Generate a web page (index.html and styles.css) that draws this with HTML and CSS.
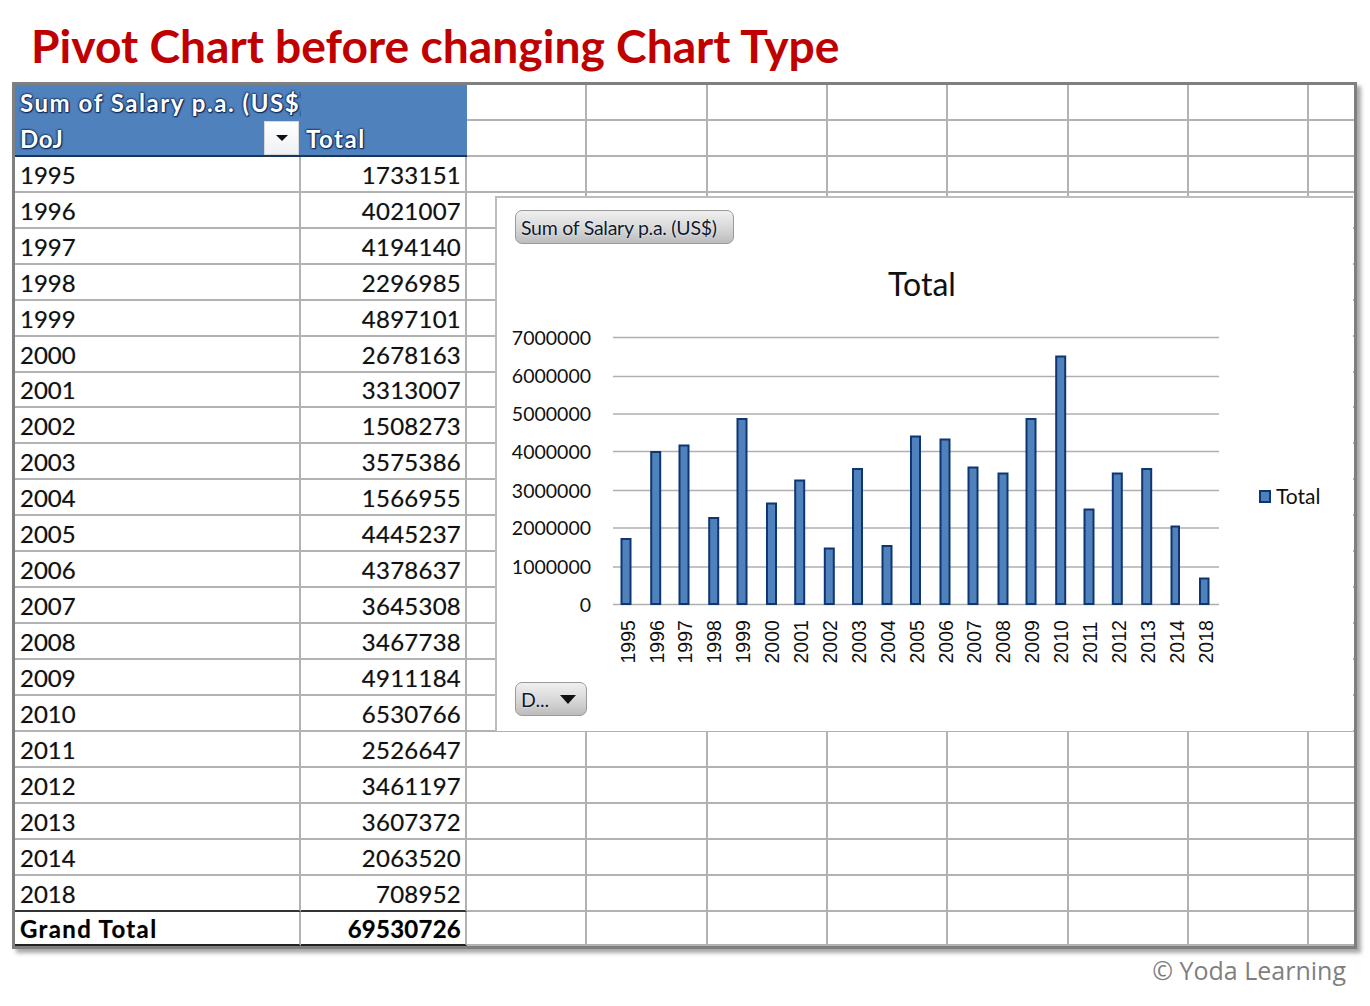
FILE: index.html
```html
<!DOCTYPE html>
<html lang="en">
<head>
<meta charset="utf-8">
<title>Pivot Chart before changing Chart Type</title>
<link rel="stylesheet" href="styles.css">
</head>
<body>
<h1 class="title">Pivot Chart before changing Chart Type</h1>
<main class="frame">
  <section class="pivot">
    <div class="head head-span">Sum of Salary p.a. (US$)</div>
    <div class="head"></div>
    <div class="head head-field"><span>DoJ</span><span class="filter"><svg width="14" height="8" viewBox="0 0 14 8"><path d="M1 1h12L7 7z"/></svg></span></div>
    <div class="head head-total">Total</div>
    <div class="year">1995</div><div class="num">1733151</div>
    <div class="year">1996</div><div class="num">4021007</div>
    <div class="year">1997</div><div class="num">4194140</div>
    <div class="year">1998</div><div class="num">2296985</div>
    <div class="year">1999</div><div class="num">4897101</div>
    <div class="year">2000</div><div class="num">2678163</div>
    <div class="year">2001</div><div class="num">3313007</div>
    <div class="year">2002</div><div class="num">1508273</div>
    <div class="year">2003</div><div class="num">3575386</div>
    <div class="year">2004</div><div class="num">1566955</div>
    <div class="year">2005</div><div class="num">4445237</div>
    <div class="year">2006</div><div class="num">4378637</div>
    <div class="year">2007</div><div class="num">3645308</div>
    <div class="year">2008</div><div class="num">3467738</div>
    <div class="year">2009</div><div class="num">4911184</div>
    <div class="year">2010</div><div class="num">6530766</div>
    <div class="year">2011</div><div class="num">2526647</div>
    <div class="year">2012</div><div class="num">3461197</div>
    <div class="year">2013</div><div class="num">3607372</div>
    <div class="year">2014</div><div class="num">2063520</div>
    <div class="year last">2018</div><div class="num last">708952</div>
    <div class="year grand grand-label">Grand Total</div><div class="num grand">69530726</div>
  </section>
  <section class="cells" aria-hidden="true">
    <i></i><i></i><i></i><i></i><i></i><i></i><i></i><i></i>
    <i></i><i></i><i></i><i></i><i></i><i></i><i></i><i></i>
    <i></i><i></i><i></i><i></i><i></i><i></i><i></i><i></i>
    <i></i><i></i><i></i><i></i><i></i><i></i><i></i><i></i>
    <i></i><i></i><i></i><i></i><i></i><i></i><i></i><i></i>
    <i></i><i></i><i></i><i></i><i></i><i></i><i></i><i></i>
    <i></i><i></i><i></i><i></i><i></i><i></i><i></i><i></i>
    <i></i><i></i><i></i><i></i><i></i><i></i><i></i><i></i>
    <i></i><i></i><i></i><i></i><i></i><i></i><i></i><i></i>
    <i></i><i></i><i></i><i></i><i></i><i></i><i></i><i></i>
    <i></i><i></i><i></i><i></i><i></i><i></i><i></i><i></i>
    <i></i><i></i><i></i><i></i><i></i><i></i><i></i><i></i>
    <i></i><i></i><i></i><i></i><i></i><i></i><i></i><i></i>
    <i></i><i></i><i></i><i></i><i></i><i></i><i></i><i></i>
    <i></i><i></i><i></i><i></i><i></i><i></i><i></i><i></i>
    <i></i><i></i><i></i><i></i><i></i><i></i><i></i><i></i>
    <i></i><i></i><i></i><i></i><i></i><i></i><i></i><i></i>
    <i></i><i></i><i></i><i></i><i></i><i></i><i></i><i></i>
    <i></i><i></i><i></i><i></i><i></i><i></i><i></i><i></i>
    <i></i><i></i><i></i><i></i><i></i><i></i><i></i><i></i>
    <i></i><i></i><i></i><i></i><i></i><i></i><i></i><i></i>
    <i></i><i></i><i></i><i></i><i></i><i></i><i></i><i></i>
    <i></i><i></i><i></i><i></i><i></i><i></i><i></i><i></i>
    <i></i><i></i><i></i><i></i><i></i><i></i><i></i><i></i>
  </section>
  <figure class="chart">
    <svg class="plot" width="857" height="534" viewBox="496 197 857 534">
      <text class="chart-title" x="922" y="296" text-anchor="middle">Total</text>
      <g class="grid">
        <path d="M613 337.5H1219M613 376.5H1219M613 414H1219M613 451.5H1219M613 490.5H1219M613 528H1219M613 567H1219M613 604.5H1219"/>
      </g>
      <g class="y" text-anchor="end">
        <text x="591" y="344.5">7000000</text>
        <text x="591" y="382.5">6000000</text>
        <text x="591" y="421">5000000</text>
        <text x="591" y="458.5">4000000</text>
        <text x="591" y="497.5">3000000</text>
        <text x="591" y="535">2000000</text>
        <text x="591" y="574">1000000</text>
        <text x="591" y="612">0</text>
      </g>
      <g class="bars">
        <rect x="621.5" y="539" width="9" height="65"/>
        <rect x="651.2" y="452" width="9" height="152"/>
        <rect x="679.5" y="445.5" width="9" height="158.5"/>
        <rect x="709.2" y="518" width="9" height="86"/>
        <rect x="737.5" y="419" width="9" height="185"/>
        <rect x="767" y="503.5" width="9" height="100.5"/>
        <rect x="795.2" y="480.5" width="9" height="123.5"/>
        <rect x="824.8" y="548.5" width="9" height="55.5"/>
        <rect x="853" y="469" width="9" height="135"/>
        <rect x="882.5" y="546" width="9" height="58"/>
        <rect x="911" y="436.5" width="9" height="167.5"/>
        <rect x="940.5" y="439.5" width="9" height="164.5"/>
        <rect x="968.5" y="467.5" width="9" height="136.5"/>
        <rect x="998.5" y="473.5" width="9" height="130.5"/>
        <rect x="1026.5" y="419" width="9" height="185"/>
        <rect x="1056.2" y="356.5" width="9" height="247.5"/>
        <rect x="1084.5" y="509.5" width="9" height="94.5"/>
        <rect x="1112.8" y="473.5" width="9" height="130.5"/>
        <rect x="1142.2" y="469" width="9" height="135"/>
        <rect x="1171.5" y="526.5" width="7.5" height="77.5"/>
        <rect x="1200" y="578.5" width="8.5" height="25.5"/>
      </g>
      <g class="x">
        <text transform="translate(634.5 663.5) rotate(-90)">1995</text>
        <text transform="translate(663.5 663.5) rotate(-90)">1996</text>
        <text transform="translate(692.3 663.5) rotate(-90)">1997</text>
        <text transform="translate(721.3 663.5) rotate(-90)">1998</text>
        <text transform="translate(750.2 663.5) rotate(-90)">1999</text>
        <text transform="translate(779.1 663.5) rotate(-90)">2000</text>
        <text transform="translate(808 663.5) rotate(-90)">2001</text>
        <text transform="translate(836.9 663.5) rotate(-90)">2002</text>
        <text transform="translate(865.8 663.5) rotate(-90)">2003</text>
        <text transform="translate(894.7 663.5) rotate(-90)">2004</text>
        <text transform="translate(923.6 663.5) rotate(-90)">2005</text>
        <text transform="translate(952.5 663.5) rotate(-90)">2006</text>
        <text transform="translate(981.4 663.5) rotate(-90)">2007</text>
        <text transform="translate(1010.3 663.5) rotate(-90)">2008</text>
        <text transform="translate(1039.2 663.5) rotate(-90)">2009</text>
        <text transform="translate(1068.1 663.5) rotate(-90)">2010</text>
        <text transform="translate(1097 663.5) rotate(-90)">2011</text>
        <text transform="translate(1125.9 663.5) rotate(-90)">2012</text>
        <text transform="translate(1154.8 663.5) rotate(-90)">2013</text>
        <text transform="translate(1183.7 663.5) rotate(-90)">2014</text>
        <text transform="translate(1212.6 663.5) rotate(-90)">2018</text>
      </g>
      <rect class="swatch" x="1260" y="491" width="10" height="11"/>
      <text class="legend" x="1276" y="504">Total</text>
    </svg>
    <div class="pill pill-field">Sum of Salary p.a. (US$)</div>
    <div class="pill pill-axis"><span>D...</span><svg width="16" height="9" viewBox="0 0 16 9"><path d="M0 0h16L8 9z"/></svg></div>
  </figure>
</main>
<footer class="credit">© Yoda Learning</footer>
</body>
</html>
```
FILE: styles.css
```css
* { box-sizing: border-box; }

html, body { margin: 0; padding: 0; background: #fff; }

body {
  width: 1370px;
  height: 1006px;
  overflow: hidden;
  font-family: "Lato", "Liberation Sans", sans-serif;
}

.title {
  margin: 0;
  height: 82px;
  padding: 17px 0 0 31px;
  font-size: 46.2px;
  line-height: 56px;
  font-weight: 700;
  color: #c00000;
  white-space: nowrap;
}

.frame {
  position: relative;
  display: flex;
  width: 1345px;
  height: 867px;
  margin-left: 12px;
  border: 3px solid #7f7f7f;
  box-shadow: 4px 4px 4px #a8a8a8;
  background: #fff;
}

.pivot, .cells {
  display: grid;
  height: 861px;
  grid-template-rows: repeat(23, 35.95px) 1fr;
}

.pivot {
  flex: none;
  width: 452px;
  grid-template-columns: 286px 166px;
  font-size: 24px;
  color: #111;
  text-shadow: 0 0 1px rgba(0, 0, 0, .35);
}

.cells {
  flex: 1;
  grid-template-columns: repeat(7, 120.35px) 1fr;
}

.cells i {
  border-right: 2px solid #b2b2b2;
  border-bottom: 2px solid #b2b2b2;
}

.cells i:nth-child(8n) { border-right: 0; }

.head {
  display: flex;
  align-items: center;
  background: #4f81bd;
  color: #fff;
  font-weight: 700;
  letter-spacing: 1.5px;
  text-shadow: 0 0 2px #0f2a57, 0 0 2px #0f2a57, 0 0 2px #0f2a57, 1px 1px 1px #0f2a57;
  white-space: nowrap;
  overflow: hidden;
}

.head-span {
  padding-left: 5px;
  letter-spacing: 1.55px;
}

.head-field, .head-total {
  border-bottom: 2px solid #17375e;
  padding-top: 2px;
}

.head-field {
  justify-content: space-between;
  padding-left: 5px;
  padding-right: 2px;
  letter-spacing: 0.6px;
}

.head-total { padding-left: 5px; }

.filter {
  display: flex;
  align-items: center;
  justify-content: center;
  width: 35px;
  height: 34px;
  margin-top: -2px;
  background: linear-gradient(#fff, #eef1f5);
  border: 1px solid #d8d8d8;
}

.filter svg { fill: #111; }

.year, .num {
  display: flex;
  align-items: center;
  padding-top: 1px;
  border-bottom: 2px solid #b2b2b2;
  border-right: 2px solid #b2b2b2;
  white-space: nowrap;
}

.year { padding-left: 5px; }

.num { justify-content: flex-end; padding-right: 4px; letter-spacing: 0.25px; }

.year.last, .num.last { border-bottom: 2px solid #333; }

.grand { font-weight: 700; border-bottom: 2px solid #222; color: #000; }

.grand-label { letter-spacing: 1.35px; }

.chart {
  position: absolute;
  left: 480px;
  top: 111px;
  width: 858px;
  height: 535px;
  margin: 0;
  background: #fff;
  border-top: 2px solid #bdbdbd;
  border-left: 2px solid #bdbdbd;
}

.plot { display: block; margin: -1px 0 0 -1px; }

.plot text { fill: #111; font-family: "Lato", "Liberation Sans", sans-serif; }

.chart-title { font-size: 32px; }

.grid path { stroke: #b0b0b0; stroke-width: 1.6; fill: none; }

.y text { font-size: 19.5px; }

.plot .x text { font-size: 19.5px; font-family: "Liberation Sans", sans-serif; }

.bars rect, .swatch {
  fill: #4f81bd;
  stroke: #0f3670;
  stroke-width: 2;
}

.legend { font-size: 21px; }

.pill {
  position: absolute;
  left: 18px;
  display: flex;
  align-items: center;
  height: 34px;
  border: 1.5px solid #9a9a9a;
  border-radius: 7px;
  background: linear-gradient(#f0f0f0, #d4d4d4 60%, #bcbcbc);
  color: #0d1a30;
  font-size: 19.5px;
  white-space: nowrap;
  text-shadow: 0 0 2px #fff;
}

.pill-field { top: 12px; width: 219px; padding-left: 5px; letter-spacing: -0.27px; }

.pill-axis {
  top: 484px;
  width: 72px;
  padding: 0 10px 0 5px;
  justify-content: space-between;
}

.pill-axis svg { fill: #111; }

.credit {
  height: 57px;
  padding: 7px 24px 0 0;
  text-align: right;
  font-family: "Open Sans", sans-serif;
  font-size: 25px;
  line-height: 28px;
  color: #7f7f7f;
}
```
